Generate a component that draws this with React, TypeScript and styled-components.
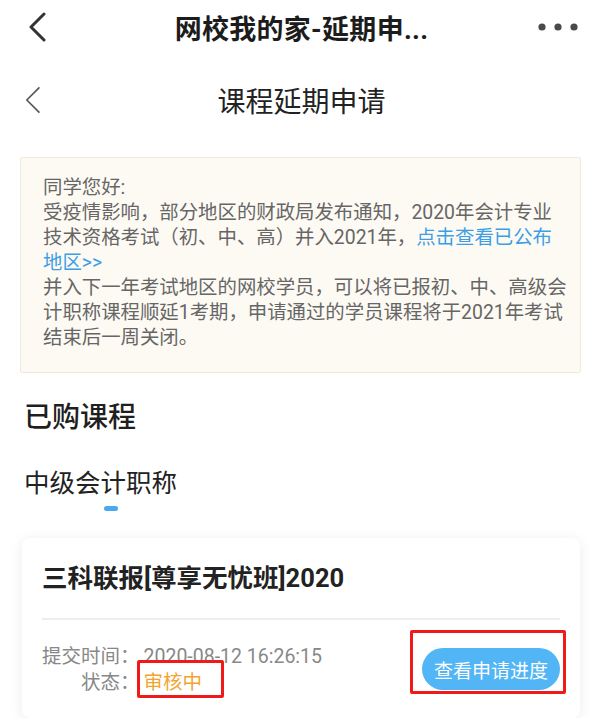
import React from "react";
import styled, { createGlobalStyle } from "styled-components";

const Global = createGlobalStyle`
  html, body { margin: 0; padding: 0; background: #ffffff; }
  body {
    font-family: Roboto, "Noto Sans CJK SC", "Noto Sans", sans-serif;
    color: #222;
    -webkit-font-smoothing: antialiased;
  }
`;

const Page = styled.div`
  width: 603px;
  display: flex;
  flex-direction: column;
`;

const TopBar = styled.div`
  height: 54px;
  display: grid;
  grid-template-columns: 70px 1fr 70px;
  align-items: center;
`;

const IconSlot = styled.div<{ $align: "start" | "end" }>`
  display: flex;
  justify-content: ${(p) => (p.$align === "start" ? "flex-start" : "flex-end")};
  align-items: center;
  padding: ${(p) => (p.$align === "start" ? "0 0 0 28px" : "0 24px 0 0")};
`;

const TopTitle = styled.div`
  text-align: center;
  font-size: 27px;
  font-weight: 700;
  color: #1c1c1c;
  white-space: nowrap;
  letter-spacing: 0.3px;
`;

const SubHeader = styled.div`
  height: 92px;
  display: grid;
  grid-template-columns: 70px 1fr 70px;
  align-items: center;
`;

const SubTitle = styled.div`
  text-align: center;
  font-size: 28px;
  font-weight: 400;
  color: #222;
`;

const Notice = styled.div`
  margin: 11px 22px 0 20px;
  padding: 17px 12px 22px 22px;
  background: #fdfaf3;
  border: 1px solid #f2ead8;
  border-radius: 2px;
  font-size: 19.4px;
  line-height: 25px;
  color: #666;
  white-space: nowrap;
`;

const Link = styled.span`
  color: #3b9ee6;
`;

const SectionTitle = styled.div`
  margin: 25px 0 0 24px;
  font-size: 28px;
  line-height: 40px;
  font-weight: 500;
  color: #1f1f1f;
`;

const TabBlock = styled.div`
  margin: 27px 0 0 24px;
  display: flex;
  flex-direction: column;
  align-items: flex-start;
`;

const TabLabel = styled.div`
  font-size: 25.5px;
  line-height: 36px;
  color: #222;
`;

const TabIndicator = styled.div`
  margin: 5px 0 0 80px;
  width: 14px;
  height: 5px;
  border-radius: 3px;
  background: #4aa8ec;
`;

const Card = styled.div`
  margin: 27px 23px 0 22px;
  padding: 22px 20px 22px 20px;
  background: #fff;
  border-radius: 8px;
  box-shadow: 0 2px 14px rgba(0, 0, 0, 0.08);
`;

const CardTitle = styled.div`
  font-size: 25.5px;
  line-height: 36px;
  font-weight: 700;
  color: #222;
`;

const Divider = styled.div`
  margin-top: 22px;
  height: 2px;
  background: #eeeeee;
`;

const CardFoot = styled.div`
  margin-top: 24px;
  display: flex;
  justify-content: space-between;
  align-items: center;
`;

const InfoGrid = styled.div`
  display: grid;
  grid-template-columns: auto auto;
  column-gap: 4px;
  font-size: 19.5px;
  line-height: 26px;
`;

const Label = styled.span`
  text-align: right;
  color: #888;
`;

const Value = styled.span<{ $tone?: "status" }>`
  color: ${(p) => (p.$tone === "status" ? "#f0a531" : "#888")};
  position: relative;
  justify-self: start;
`;

const Mark = styled.span<{ $t: number; $r: number; $b: number; $l: number }>`
  position: absolute;
  top: ${(p) => p.$t}px;
  right: ${(p) => p.$r}px;
  bottom: ${(p) => p.$b}px;
  left: ${(p) => p.$l}px;
  border: 3px solid #f01a1a;
  border-radius: 2px;
  pointer-events: none;
`;

const ButtonWrap = styled.div`
  position: relative;
  margin-top: -2px;
`;

const ProgressButton = styled.button`
  width: 138px;
  height: 42px;
  border: none;
  border-radius: 21px;
  background: #52b5f5;
  color: #fff;
  font-family: inherit;
  font-size: 19px;
  padding: 0;
`;

const Chevron = ({ size, stroke, color }: { size: number; stroke: number; color: string }) => (
  <svg width={size * 0.6} height={size} viewBox="0 0 18 30" fill="none">
    <path d="M16 2 L3 15 L16 28" stroke={color} strokeWidth={stroke} strokeLinecap="round" strokeLinejoin="round" />
  </svg>
);

const Dots = () => (
  <svg width="42" height="10" viewBox="0 0 42 10">
    <circle cx="5" cy="5" r="3.6" fill="#4a4a4a" />
    <circle cx="21" cy="5" r="3.6" fill="#4a4a4a" />
    <circle cx="37" cy="5" r="3.6" fill="#4a4a4a" />
  </svg>
);

export default function App() {
  return (
    <Page>
      <Global />
      <TopBar>
        <IconSlot $align="start">
          <Chevron size={30} stroke={3} color="#333" />
        </IconSlot>
        <TopTitle>网校我的家-延期申...</TopTitle>
        <IconSlot $align="end">
          <Dots />
        </IconSlot>
      </TopBar>
      <SubHeader>
        <IconSlot $align="start" style={{ paddingLeft: 24 }}>
          <Chevron size={28} stroke={1.8} color="#555" />
        </IconSlot>
        <SubTitle>课程延期申请</SubTitle>
        <div />
      </SubHeader>
      <Notice>
        同学您好:
        <br />
        受疫情影响，部分地区的财政局发布通知，2020年会计专业
        <br />
        技术资格考试（初、中、高）并入2021年，
        <Link>
          点击查看已公布
          <br />
          地区&gt;&gt;
        </Link>
        <br />
        并入下一年考试地区的网校学员，可以将已报初、中、高级会
        <br />
        计职称课程顺延1考期，申请通过的学员课程将于2021年考试
        <br />
        结束后一周关闭。
      </Notice>
      <SectionTitle>已购课程</SectionTitle>
      <TabBlock>
        <TabLabel>中级会计职称</TabLabel>
        <TabIndicator />
      </TabBlock>
      <Card>
        <CardTitle>三科联报[尊享无忧班]2020</CardTitle>
        <Divider />
        <CardFoot>
          <InfoGrid>
            <Label>提交时间：</Label>
            <Value>2020-08-12 16:26:15</Value>
            <Label>状态：</Label>
            <Value $tone="status">
              审核中
              <Mark $t={-10} $r={-22} $b={-2} $l={-7} />
            </Value>
          </InfoGrid>
          <ButtonWrap>
            <ProgressButton>查看申请进度</ProgressButton>
            <Mark $t={-18} $r={-6} $b={-4} $l={-12} />
          </ButtonWrap>
        </CardFoot>
      </Card>
    </Page>
  );
}
